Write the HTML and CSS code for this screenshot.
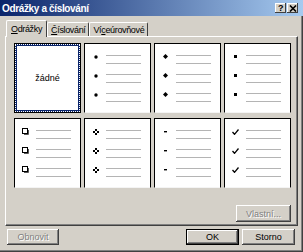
FILE: index.html
```html
<!DOCTYPE html>
<html lang="cs">
	<head>
		<meta charset="UTF-8" />
		<title>Odrážky a číslování</title>
		<link rel="stylesheet" href="styles.css">
	</head>
	<body>
		<div class="dialog">
			<div class="titlebar">
				<span>Odrážky a číslování</span>
				<div class="tb-btns">
					<span class="tb-btn">?</span>
					<span class="tb-btn">
						<svg viewBox="0 0 8 7" width="8" height="7">
							<path d="M1 0.5 L7 6.5 M7 0.5 L1 6.5" stroke="#000" stroke-width="1.6" />
						</svg>
					</span>
				</div>
			</div>
			<div class="content">
				<div class="tabs">
					<div class="tab active"><u>O</u>drážky</div>
					<div class="tab"><u>Č</u>íslování</div>
					<div class="tab">Ví<u>c</u>eúrovňové</div>
				</div>
				<div class="panel">
					<div class="grid">
						<div class="card selected">žádné</div>
						<div class="card">
							<div class="item"><span class="bullet"><svg width="4" height="4"><circle cx="2" cy="2" r="1.7" /></svg></span><span class="lines"><i></i><i></i></span></div>
							<div class="item"><span class="bullet"><svg width="4" height="4"><circle cx="2" cy="2" r="1.7" /></svg></span><span class="lines"><i></i><i></i></span></div>
							<div class="item"><span class="bullet"><svg width="4" height="4"><circle cx="2" cy="2" r="1.7" /></svg></span><span class="lines"><i></i><i></i></span></div>
						</div>
						<div class="card">
							<div class="item"><span class="bullet"><svg width="5" height="5"><polygon points="2.5,0 5,2.5 2.5,5 0,2.5" /></svg></span><span class="lines"><i></i><i></i></span></div>
							<div class="item"><span class="bullet"><svg width="5" height="5"><polygon points="2.5,0 5,2.5 2.5,5 0,2.5" /></svg></span><span class="lines"><i></i><i></i></span></div>
							<div class="item"><span class="bullet"><svg width="5" height="5"><polygon points="2.5,0 5,2.5 2.5,5 0,2.5" /></svg></span><span class="lines"><i></i><i></i></span></div>
						</div>
						<div class="card">
							<div class="item"><span class="bullet"><svg width="3" height="3"><rect width="3" height="3" /></svg></span><span class="lines"><i></i><i></i></span></div>
							<div class="item"><span class="bullet"><svg width="3" height="3"><rect width="3" height="3" /></svg></span><span class="lines"><i></i><i></i></span></div>
							<div class="item"><span class="bullet"><svg width="3" height="3"><rect width="3" height="3" /></svg></span><span class="lines"><i></i><i></i></span></div>
						</div>
						<div class="card">
							<div class="item"><span class="bullet"><svg width="7" height="7"><path d="M2 6.5 H6.5 V2" fill="none" stroke="#555" /><rect x="0.5" y="0.5" width="5" height="5" fill="#fff" stroke="#000" /></svg></span><span class="lines"><i></i><i></i></span></div>
							<div class="item"><span class="bullet"><svg width="7" height="7"><path d="M2 6.5 H6.5 V2" fill="none" stroke="#555" /><rect x="0.5" y="0.5" width="5" height="5" fill="#fff" stroke="#000" /></svg></span><span class="lines"><i></i><i></i></span></div>
							<div class="item"><span class="bullet"><svg width="7" height="7"><path d="M2 6.5 H6.5 V2" fill="none" stroke="#555" /><rect x="0.5" y="0.5" width="5" height="5" fill="#fff" stroke="#000" /></svg></span><span class="lines"><i></i><i></i></span></div>
						</div>
						<div class="card">
							<div class="item"><span class="bullet"><svg width="6" height="6"><rect x="2" y="0" width="2" height="2" /><rect x="0" y="2" width="2" height="2" /><rect x="4" y="2" width="2" height="2" /><rect x="2" y="4" width="2" height="2" /></svg></span><span class="lines"><i></i><i></i></span></div>
							<div class="item"><span class="bullet"><svg width="6" height="6"><rect x="2" y="0" width="2" height="2" /><rect x="0" y="2" width="2" height="2" /><rect x="4" y="2" width="2" height="2" /><rect x="2" y="4" width="2" height="2" /></svg></span><span class="lines"><i></i><i></i></span></div>
							<div class="item"><span class="bullet"><svg width="6" height="6"><rect x="2" y="0" width="2" height="2" /><rect x="0" y="2" width="2" height="2" /><rect x="4" y="2" width="2" height="2" /><rect x="2" y="4" width="2" height="2" /></svg></span><span class="lines"><i></i><i></i></span></div>
						</div>
						<div class="card">
							<div class="item"><span class="bullet"><svg width="3" height="2"><rect width="3" height="1.4" /></svg></span><span class="lines"><i></i><i></i></span></div>
							<div class="item"><span class="bullet"><svg width="3" height="2"><rect width="3" height="1.4" /></svg></span><span class="lines"><i></i><i></i></span></div>
							<div class="item"><span class="bullet"><svg width="3" height="2"><rect width="3" height="1.4" /></svg></span><span class="lines"><i></i><i></i></span></div>
						</div>
						<div class="card">
							<div class="item"><span class="bullet"><svg width="7" height="6"><path d="M0.5 3 L2.5 5.3 L6.5 0.5" fill="none" stroke="#000" stroke-width="1.3" /></svg></span><span class="lines"><i></i><i></i></span></div>
							<div class="item"><span class="bullet"><svg width="7" height="6"><path d="M0.5 3 L2.5 5.3 L6.5 0.5" fill="none" stroke="#000" stroke-width="1.3" /></svg></span><span class="lines"><i></i><i></i></span></div>
							<div class="item"><span class="bullet"><svg width="7" height="6"><path d="M0.5 3 L2.5 5.3 L6.5 0.5" fill="none" stroke="#000" stroke-width="1.3" /></svg></span><span class="lines"><i></i><i></i></span></div>
						</div>
					</div>
					<div class="panel-foot">
						<button class="btn wide" disabled>Vlastní...</button>
					</div>
				</div>
				<div class="footer">
					<button class="btn" disabled>Obnovit</button>
					<span class="spacer"></span>
					<button class="btn default">OK</button>
					<button class="btn">Storno</button>
				</div>
			</div>
		</div>
	</body>
</html>
```

FILE: styles.css
```css
* {
	box-sizing: border-box;
}
body {
	margin: 0;
	width: 303px;
	height: 252px;
	overflow: hidden;
	background: #d4d0c8;
	font-family: 'Liberation Sans', Arial, sans-serif;
	font-size: 9px;
	color: #000;
}
.dialog {
	height: 252px;
	display: flex;
	flex-direction: column;
	box-shadow: inset -1px -1px #404040, inset -2px -2px #808080;
}
.titlebar {
	height: 16px;
	flex: none;
	background: linear-gradient(to right, #0a246a, #a6caf0);
	color: #fff;
	font-weight: bold;
	font-size: 10px;
	letter-spacing: -0.35px;
	display: flex;
	align-items: center;
	justify-content: space-between;
	padding: 0 5px 0 2px;
}
.tb-btns {
	display: flex;
	gap: 1px;
}
.tb-btn {
	width: 11px;
	height: 10px;
	background: #d4d0c8;
	box-shadow: inset -1px -1px #404040, inset 1px 1px #fff;
	color: #000;
	font-size: 9px;
	line-height: 1;
	display: flex;
	align-items: center;
	justify-content: center;
}
.content {
	flex: 1;
	display: flex;
	flex-direction: column;
	padding: 4px 5px 0 5px;
}
.tabs {
	height: 16px;
	display: flex;
	align-items: flex-end;
	padding-left: 1px;
	position: relative;
	z-index: 1;
	letter-spacing: -0.35px;
}
.tab {
	height: 14px;
	padding: 0 3px;
	border: 1px solid;
	border-color: #fff #404040 transparent #fff;
	border-bottom: none;
	border-radius: 2px 2px 0 0;
	display: flex;
	align-items: center;
	justify-content: center;
}
.tab.active {
	height: 17px;
	margin-bottom: -1px;
	padding: 0 4px 1px 4px;
	background: #d4d0c8;
}
.tab u {
	text-decoration-thickness: 1px;
}
.panel {
	height: 190px;
	flex: none;
	border: 1px solid;
	border-color: #fff #404040 #404040 #fff;
	box-shadow: inset -1px -1px #808080;
	padding: 6px 5px 3px 8px;
	display: flex;
	flex-direction: column;
}
.grid {
	display: grid;
	grid-template-columns: repeat(4, 67px);
	grid-template-rows: 70px 70px;
	column-gap: 3px;
	row-gap: 5px;
}
.card {
	background: #fff;
	border: 1px solid #000;
	border-bottom-color: #f4f4f4;
	padding-top: 9px;
	display: flex;
	flex-direction: column;
}
.card.selected {
	padding: 0;
	align-items: center;
	justify-content: center;
	font-size: 9px;
	box-shadow: inset 0 0 0 2px #0a246a;
	outline: 1px dotted #fff;
	outline-offset: -2px;
	border-bottom-color: #000;
}
.item {
	height: 19px;
	display: grid;
	grid-template-columns: 21px 35px;
	align-items: start;
}
.bullet {
	height: 7px;
	display: flex;
	align-items: center;
	justify-content: center;
}
.bullet svg {
	display: block;
	fill: #000;
}
.lines {
	display: flex;
	flex-direction: column;
	gap: 7px;
	padding-top: 2px;
}
.lines i {
	display: block;
	height: 1px;
	background: #b4b4b4;
}
.panel-foot {
	margin-top: auto;
	display: flex;
	justify-content: flex-end;
	padding-right: 1px;
}
.btn {
	width: 53px;
	height: 16px;
	padding: 0;
	background: #d4d0c8;
	border: none;
	font: inherit;
	color: #000;
	box-shadow: inset -1px -1px #404040, inset 1px 1px #fff, inset -2px -2px #808080;
}
.btn.wide {
	width: 55px;
	height: 17px;
}
.btn:disabled {
	color: #808080;
	text-shadow: 1px 1px #fff;
}
.btn.default {
	border: 1px solid #000;
}
.footer {
	display: flex;
	gap: 3px;
	padding: 3px 3px 0 2px;
}
.footer .btn:first-child {
	width: 52px;
}
.spacer {
	flex: 1;
}
```
